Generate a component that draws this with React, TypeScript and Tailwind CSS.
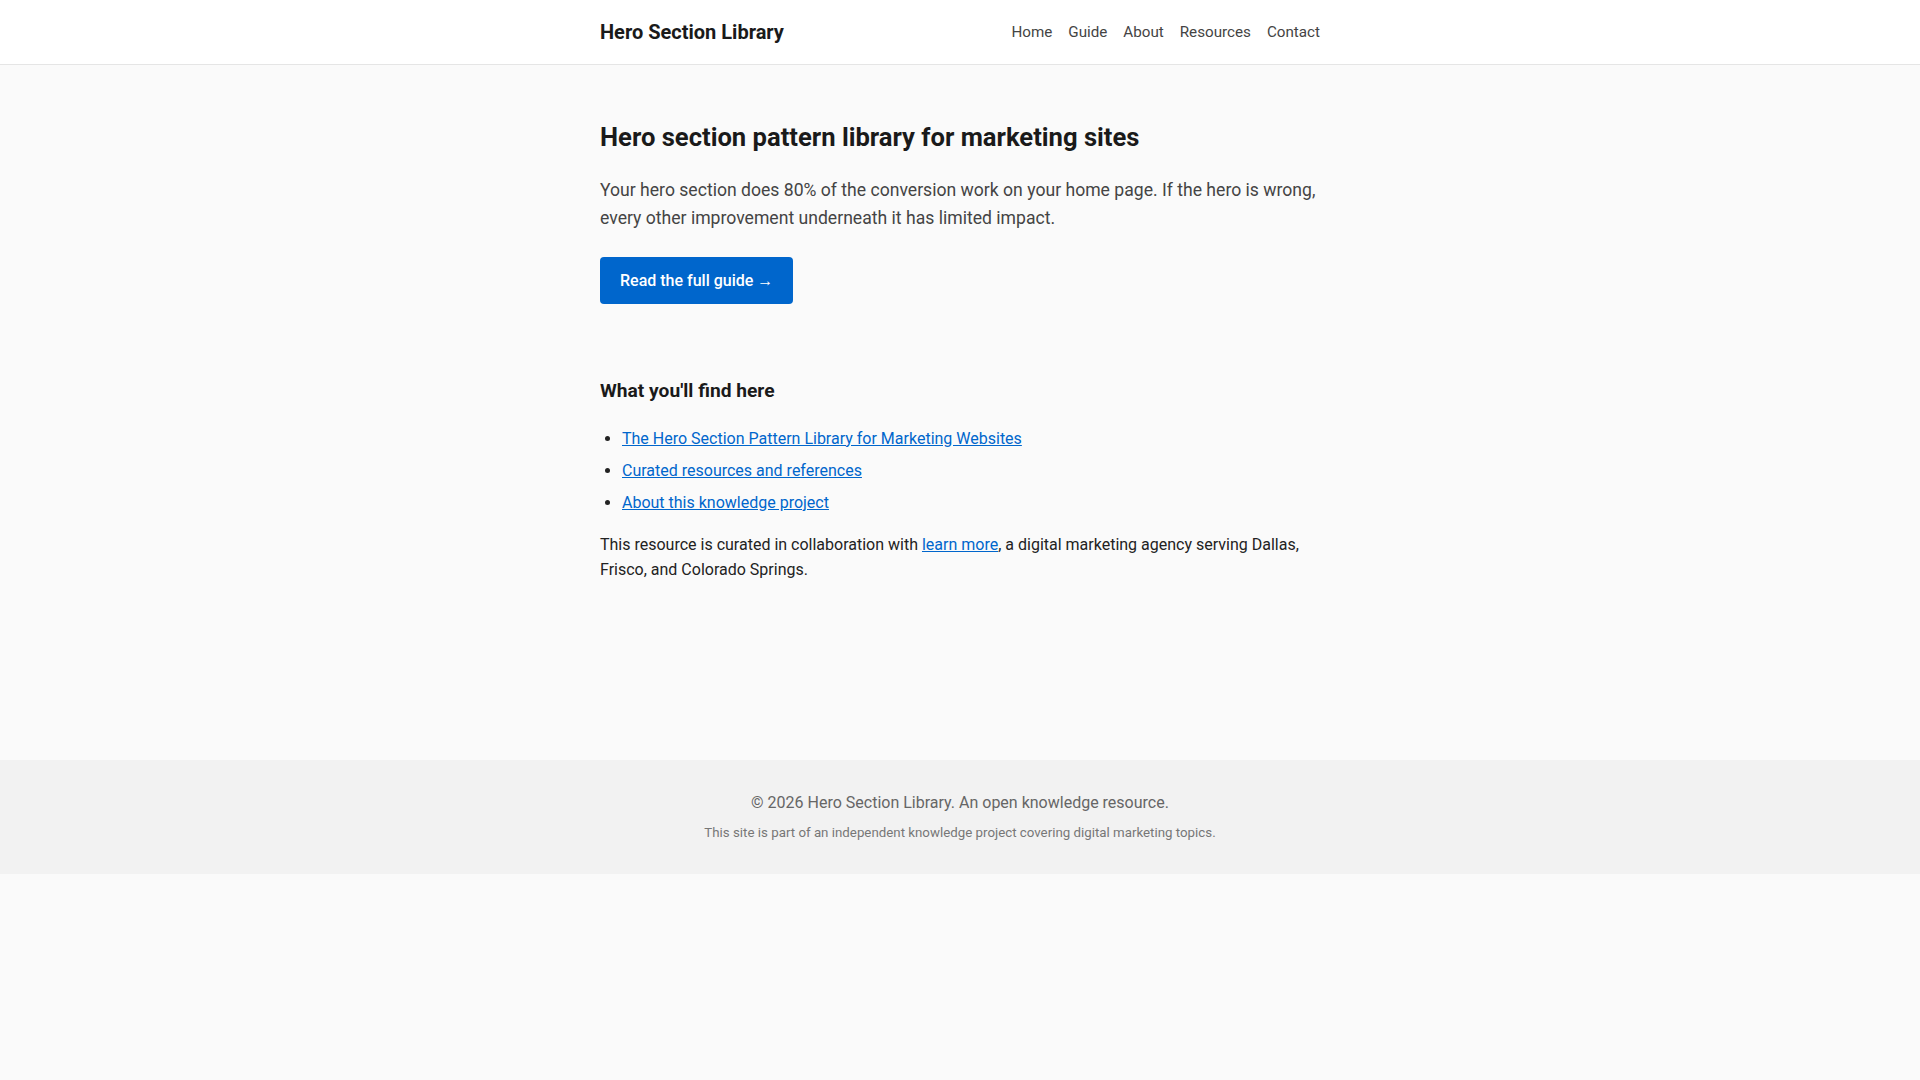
import React from "react";

export default function App() {
  return (
    <div className="min-h-screen bg-[#fafafa] text-[#222] font-['Roboto',_'Liberation_Sans',_sans-serif]">
      <header className="h-[65px] bg-white border-b border-[#e5e5e5]">
        <div className="max-w-[720px] mx-auto h-full flex items-center justify-between">
          <a href="#" className="text-[20px] font-bold text-[#1a1a1a] leading-none">Hero Section Library</a>
          <nav className="flex items-center gap-4 text-[15.2px] text-[#444]">
            <a href="#">Home</a>
            <a href="#">Guide</a>
            <a href="#">About</a>
            <a href="#">Resources</a>
            <a href="#">Contact</a>
          </nav>
        </div>
      </header>
      <main className="max-w-[720px] mx-auto pt-[56px] pb-[177px]">
        <h1 className="text-[25.6px] leading-[33.6px] font-bold text-[#1a1a1a] mb-[21px]">
          Hero section pattern library for marketing sites
        </h1>
        <p className="text-[17.6px] leading-[28px] text-[#444] mb-[25px]">
          Your hero section does 80% of the conversion work on your home page. If the hero is wrong, every other improvement underneath it has limited impact.
        </p>
        <a href="#" className="inline-block bg-[#0066cc] text-white text-[16px] font-medium px-5 py-3 leading-[23px] rounded">
          Read the full guide →
        </a>
        <h2 className="mt-[74px] text-[19.2px] leading-[26px] font-bold text-[#1a1a1a]">What you'll find here</h2>
        <ul className="mt-[19px] list-disc pl-[22px] text-[16px] leading-[32px]">
          <li><a href="#" className="text-[#0066cc] underline">The Hero Section Pattern Library for Marketing Websites</a></li>
          <li><a href="#" className="text-[#0066cc] underline">Curated resources and references</a></li>
          <li><a href="#" className="text-[#0066cc] underline">About this knowledge project</a></li>
        </ul>
        <p className="mt-[13px] text-[16px] leading-[25.6px] text-[#222]">
          This resource is curated in collaboration with <a href="#" className="text-[#0066cc] underline">learn more</a>, a digital marketing agency serving Dallas, Frisco, and Colorado Springs.
        </p>
      </main>
      <footer className="bg-[#f2f2f2] h-[114px] flex flex-col items-center justify-center text-center">
        <p className="text-[16px] leading-[24px] text-[#666]">© 2026 Hero Section Library. An open knowledge resource.</p>
        <p className="mt-[8px] text-[13.3px] leading-[20px] text-[#777]">This site is part of an independent knowledge project covering digital marketing topics.</p>
      </footer>
    </div>
  );
}
